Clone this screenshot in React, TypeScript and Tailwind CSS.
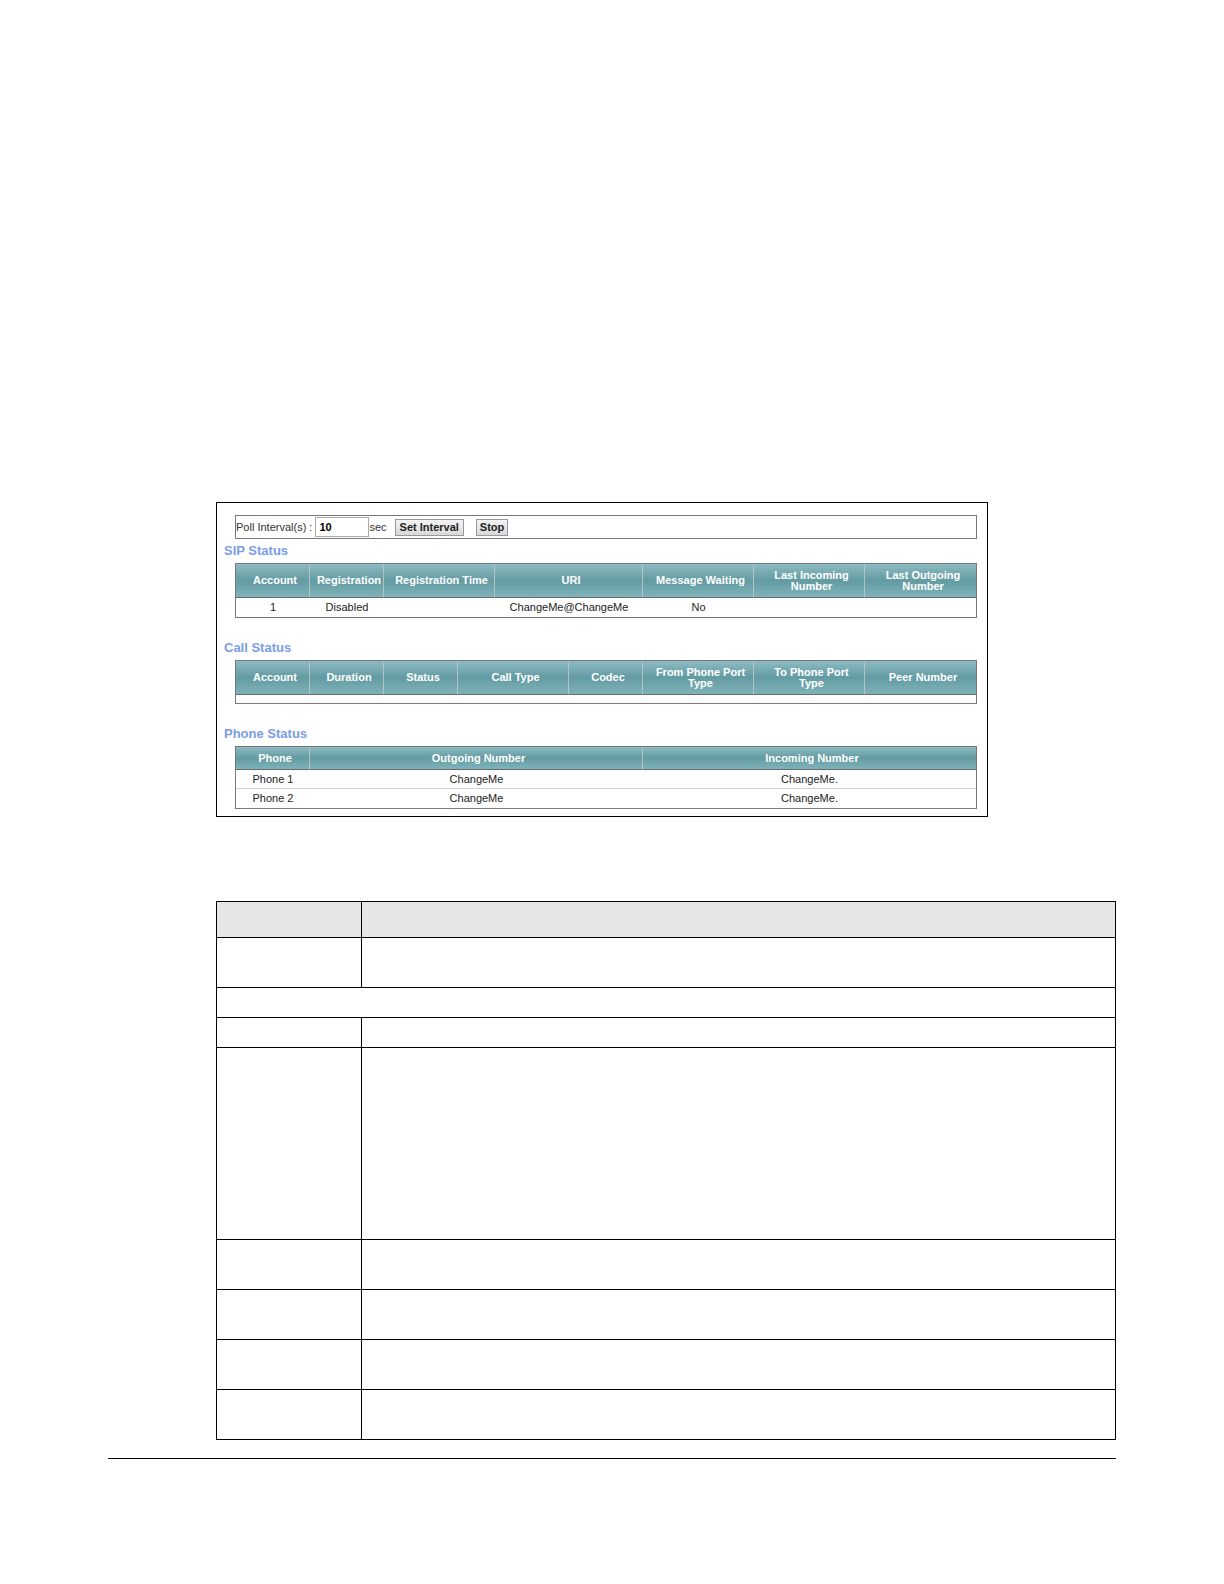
import { useState } from 'react'

// --- Types ---
interface Column {
    label: string
    width: string
}

interface StatusTableProps {
    title: string
    columns: Column[]
    rows: string[][]
    compact?: boolean
}

// --- Data ---
const sipColumns: Column[] = [
    { label: 'Account', width: 'w-[10%]' },
    { label: 'Registration', width: 'w-[10%]' },
    { label: 'Registration Time', width: 'w-[15%]' },
    { label: 'URI', width: 'w-[20%]' },
    { label: 'Message Waiting', width: 'w-[15%]' },
    { label: 'Last Incoming\nNumber', width: 'w-[15%]' },
    { label: 'Last Outgoing\nNumber', width: 'w-[15%]' },
]

const callColumns: Column[] = [
    { label: 'Account', width: 'w-[10%]' },
    { label: 'Duration', width: 'w-[10%]' },
    { label: 'Status', width: 'w-[10%]' },
    { label: 'Call Type', width: 'w-[15%]' },
    { label: 'Codec', width: 'w-[10%]' },
    { label: 'From Phone Port\nType', width: 'w-[15%]' },
    { label: 'To Phone Port\nType', width: 'w-[15%]' },
    { label: 'Peer Number', width: 'w-[15%]' },
]

const phoneColumns: Column[] = [
    { label: 'Phone', width: 'w-[10%]' },
    { label: 'Outgoing Number', width: 'w-[45%]' },
    { label: 'Incoming Number', width: 'w-[45%]' },
]

const descriptionRows = [
    { height: 'h-[50px]', full: false },
    { height: 'h-[30px]', full: true },
    { height: 'h-[30px]', full: false },
    { height: 'h-[192px]', full: false },
    { height: 'h-[50px]', full: false },
    { height: 'h-[50px]', full: false },
    { height: 'h-[50px]', full: false },
    { height: 'h-[50px]', full: false },
]

// --- Status Table ---
function StatusTable({ title, columns, rows, compact }: StatusTableProps) {
    return (
        <section>
            <h2 className="ml-[7px] h-5 text-[13px] leading-4 font-bold text-[#7b9de6]">{title}</h2>
            <div className="mr-[10px] ml-[18px] border border-[#77787a]">
                <table className="w-full table-fixed border-separate border-spacing-0 text-center text-[11px] leading-[11px]">
                    <thead>
                        <tr className={compact ? 'h-[23px]' : 'h-[34px]'}>
                            {columns.map((c) => (
                                <th
                                    key={c.label}
                                    className={`${c.width} border-r border-b border-r-[#b5c3c6] border-b-[#626d70] bg-linear-to-b from-[#8dbbc3] via-[#639ba2] to-[#7fb3b9] pl-[5px] font-bold whitespace-pre-line text-white last:border-r-0`}
                                >
                                    {c.label}
                                </th>
                            ))}
                        </tr>
                    </thead>
                    <tbody>
                        {rows.map((row, i) => (
                            <tr key={i} className="group h-[19px]">
                                {row.map((cell, j) => (
                                    <td key={j} className="border-b border-[#cfcfcf] text-[#222] group-last:border-b-0">{cell}</td>
                                ))}
                            </tr>
                        ))}
                        {rows.length === 0 && (
                            <tr className="h-2">
                                <td colSpan={columns.length} />
                            </tr>
                        )}
                    </tbody>
                </table>
            </div>
        </section>
    )
}

// --- Poll Bar ---
function PollBar() {
    const [interval, setPollInterval] = useState('10')

    return (
        <form className="mr-[10px] ml-[18px] flex h-6 items-center border border-[#77787a] text-[11px] text-[#333]" onSubmit={(e) => e.preventDefault()}>
            <label htmlFor="poll">Poll Interval(s) :</label>
            <input
                id="poll"
                value={interval}
                onChange={(e) => setPollInterval(e.target.value)}
                className="ml-[3px] h-5 w-[54px] border border-[#a9a9a9] px-[3px] font-bold text-black"
            />
            <span>sec</span>
            <button type="submit" className="ml-2 h-[17px] border border-[#999] bg-linear-to-b from-[#f4f4f4] to-[#d9d9d9] px-1 leading-[15px] font-bold text-[#222]">Set Interval</button>
            <button type="button" className="ml-3 h-[17px] border border-[#999] bg-linear-to-b from-[#f4f4f4] to-[#d9d9d9] px-[3px] leading-[15px] font-bold text-[#222]">Stop</button>
        </form>
    )
}

// --- Description Table ---
function DescriptionTable() {
    return (
        <table className="w-full table-fixed border-separate border-spacing-0 border-t border-l border-black">
            <thead>
                <tr className="h-9 bg-[#e6e6e6]">
                    <th className="w-[145px] border-r border-b border-black" />
                    <th className="border-r border-b border-black" />
                </tr>
            </thead>
            <tbody>
                {descriptionRows.map((row, i) => (
                    <tr key={i} className={row.height}>
                        {row.full ? (
                            <td colSpan={2} className="border-r border-b border-black" />
                        ) : (
                            <>
                                <td className="border-r border-b border-black" />
                                <td className="border-r border-b border-black" />
                            </>
                        )}
                    </tr>
                ))}
            </tbody>
        </table>
    )
}

export default function App() {
    return (
        <main className="min-h-screen bg-white px-[108px] pt-[502px] pb-[125px] font-['Liberation_Sans',Arial,sans-serif]">
            <div className="pl-[108px]">
                <div className="w-full max-w-[772px] border border-black pt-3 pb-[7px]">
                    <PollBar />
                    <div className="mt-1 flex flex-col gap-[22px]">
                        <StatusTable
                            title="SIP Status"
                            columns={sipColumns}
                            rows={[['1', 'Disabled', '', 'ChangeMe@ChangeMe', 'No', '', '']]}
                        />
                        <StatusTable title="Call Status" columns={callColumns} rows={[]} />
                        <StatusTable
                            title="Phone Status"
                            columns={phoneColumns}
                            rows={[
                                ['Phone 1', 'ChangeMe', 'ChangeMe.'],
                                ['Phone 2', 'ChangeMe', 'ChangeMe.'],
                            ]}
                            compact
                        />
                    </div>
                </div>
                <div className="mt-[84px]">
                    <DescriptionTable />
                </div>
            </div>
            <hr className="mt-[18px] border-t border-black" />
        </main>
    )
}
